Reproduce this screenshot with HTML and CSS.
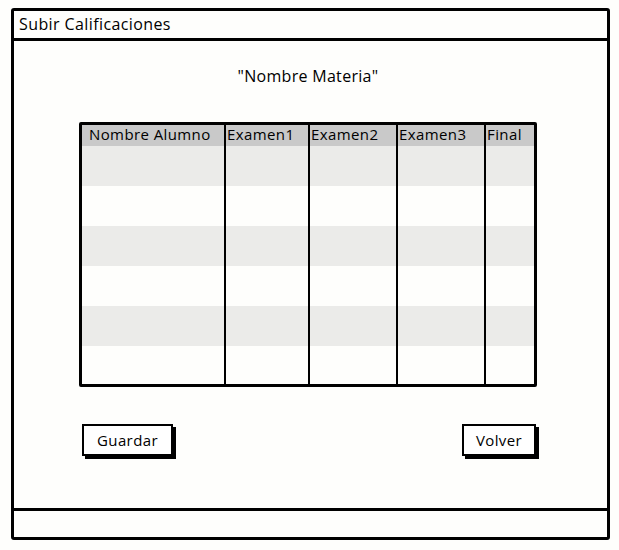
FILE: index.html
```html
<!DOCTYPE html>
<html lang="es">
<head>
<meta charset="utf-8">
<title>Subir Calificaciones</title>
<link rel="stylesheet" href="styles.css">
</head>
<body>
<div class="window">
  <div class="titlebar">Subir Calificaciones</div>
  <div class="content">
    <div class="subject">"Nombre Materia"</div>
    <div class="grid">
      <div class="cell head first">Nombre Alumno</div>
      <div class="cell head">Examen1</div>
      <div class="cell head">Examen2</div>
      <div class="cell head">Examen3</div>
      <div class="cell head">Final</div>

      <div class="cell alt"></div><div class="cell alt"></div><div class="cell alt"></div><div class="cell alt"></div><div class="cell alt"></div>
      <div class="cell"></div><div class="cell"></div><div class="cell"></div><div class="cell"></div><div class="cell"></div>
      <div class="cell alt"></div><div class="cell alt"></div><div class="cell alt"></div><div class="cell alt"></div><div class="cell alt"></div>
      <div class="cell"></div><div class="cell"></div><div class="cell"></div><div class="cell"></div><div class="cell"></div>
      <div class="cell alt"></div><div class="cell alt"></div><div class="cell alt"></div><div class="cell alt"></div><div class="cell alt"></div>
      <div class="cell"></div><div class="cell"></div><div class="cell"></div><div class="cell"></div><div class="cell"></div>
    </div>
    <div class="actions">
      <button class="btn btn-save">Guardar</button>
      <button class="btn btn-back">Volver</button>
    </div>
  </div>
  <div class="statusbar"></div>
</div>
</body>
</html>
```

FILE: styles.css
```css
* { box-sizing: border-box; }

html, body {
  margin: 0;
  padding: 0;
  background: #fefefc;
  font-family: "Open Sans", "Noto Sans", sans-serif;
  font-weight: 500;
  color: #000;
}

.window {
  margin: 8px 0 0 11px;
  width: 599px;
  height: 532px;
  border: 3px solid #000;
  border-radius: 3px;
  display: flex;
  flex-direction: column;
}

.titlebar {
  height: 30px;
  border-bottom: 3px solid #000;
  font-size: 16px;
  line-height: 26px;
  padding-left: 5px;
  letter-spacing: 0.4px;
}

.content {
  flex: 1;
  padding: 25px 0 0 65px;
}

.subject {
  width: 458px;
  text-align: center;
  font-size: 16px;
  line-height: 20px;
  letter-spacing: 0.3px;
}

.grid {
  margin-top: 36px;
  width: 458px;
  border: 3px solid #000;
  border-radius: 2px;
  display: grid;
  grid-template-columns: 142px 84px 88px 88px 50px;
  grid-template-rows: 21px 40px 40px 40px 40px 40px 38px;
}

.cell {
  border-left: 2px solid #000;
  font-size: 15px;
  line-height: 19px;
  padding-left: 1px;
  white-space: nowrap;
  overflow: hidden;
  letter-spacing: 0.4px;
}

.cell:nth-child(5n+1) {
  border-left: none;
}

.head {
  background: #c9c9c9;
}

.head.first {
  padding-left: 7px;
}

.alt {
  background: #ebebe9;
}

.actions {
  margin-top: 37px;
  width: 458px;
  padding-left: 3px;
  display: flex;
  justify-content: space-between;
}

.btn {
  font-family: inherit;
  font-weight: 500;
  font-size: 15px;
  height: 32px;
  border: 2px solid #000;
  background: #fff;
  box-shadow: 3px 3px 0 #000;
  padding: 0;
  color: #000;
  letter-spacing: 0.4px;
}

.btn-save { width: 91px; }
.btn-back { width: 74px; margin-right: 1px; }

.statusbar {
  height: 29px;
  border-top: 3px solid #000;
}
```
